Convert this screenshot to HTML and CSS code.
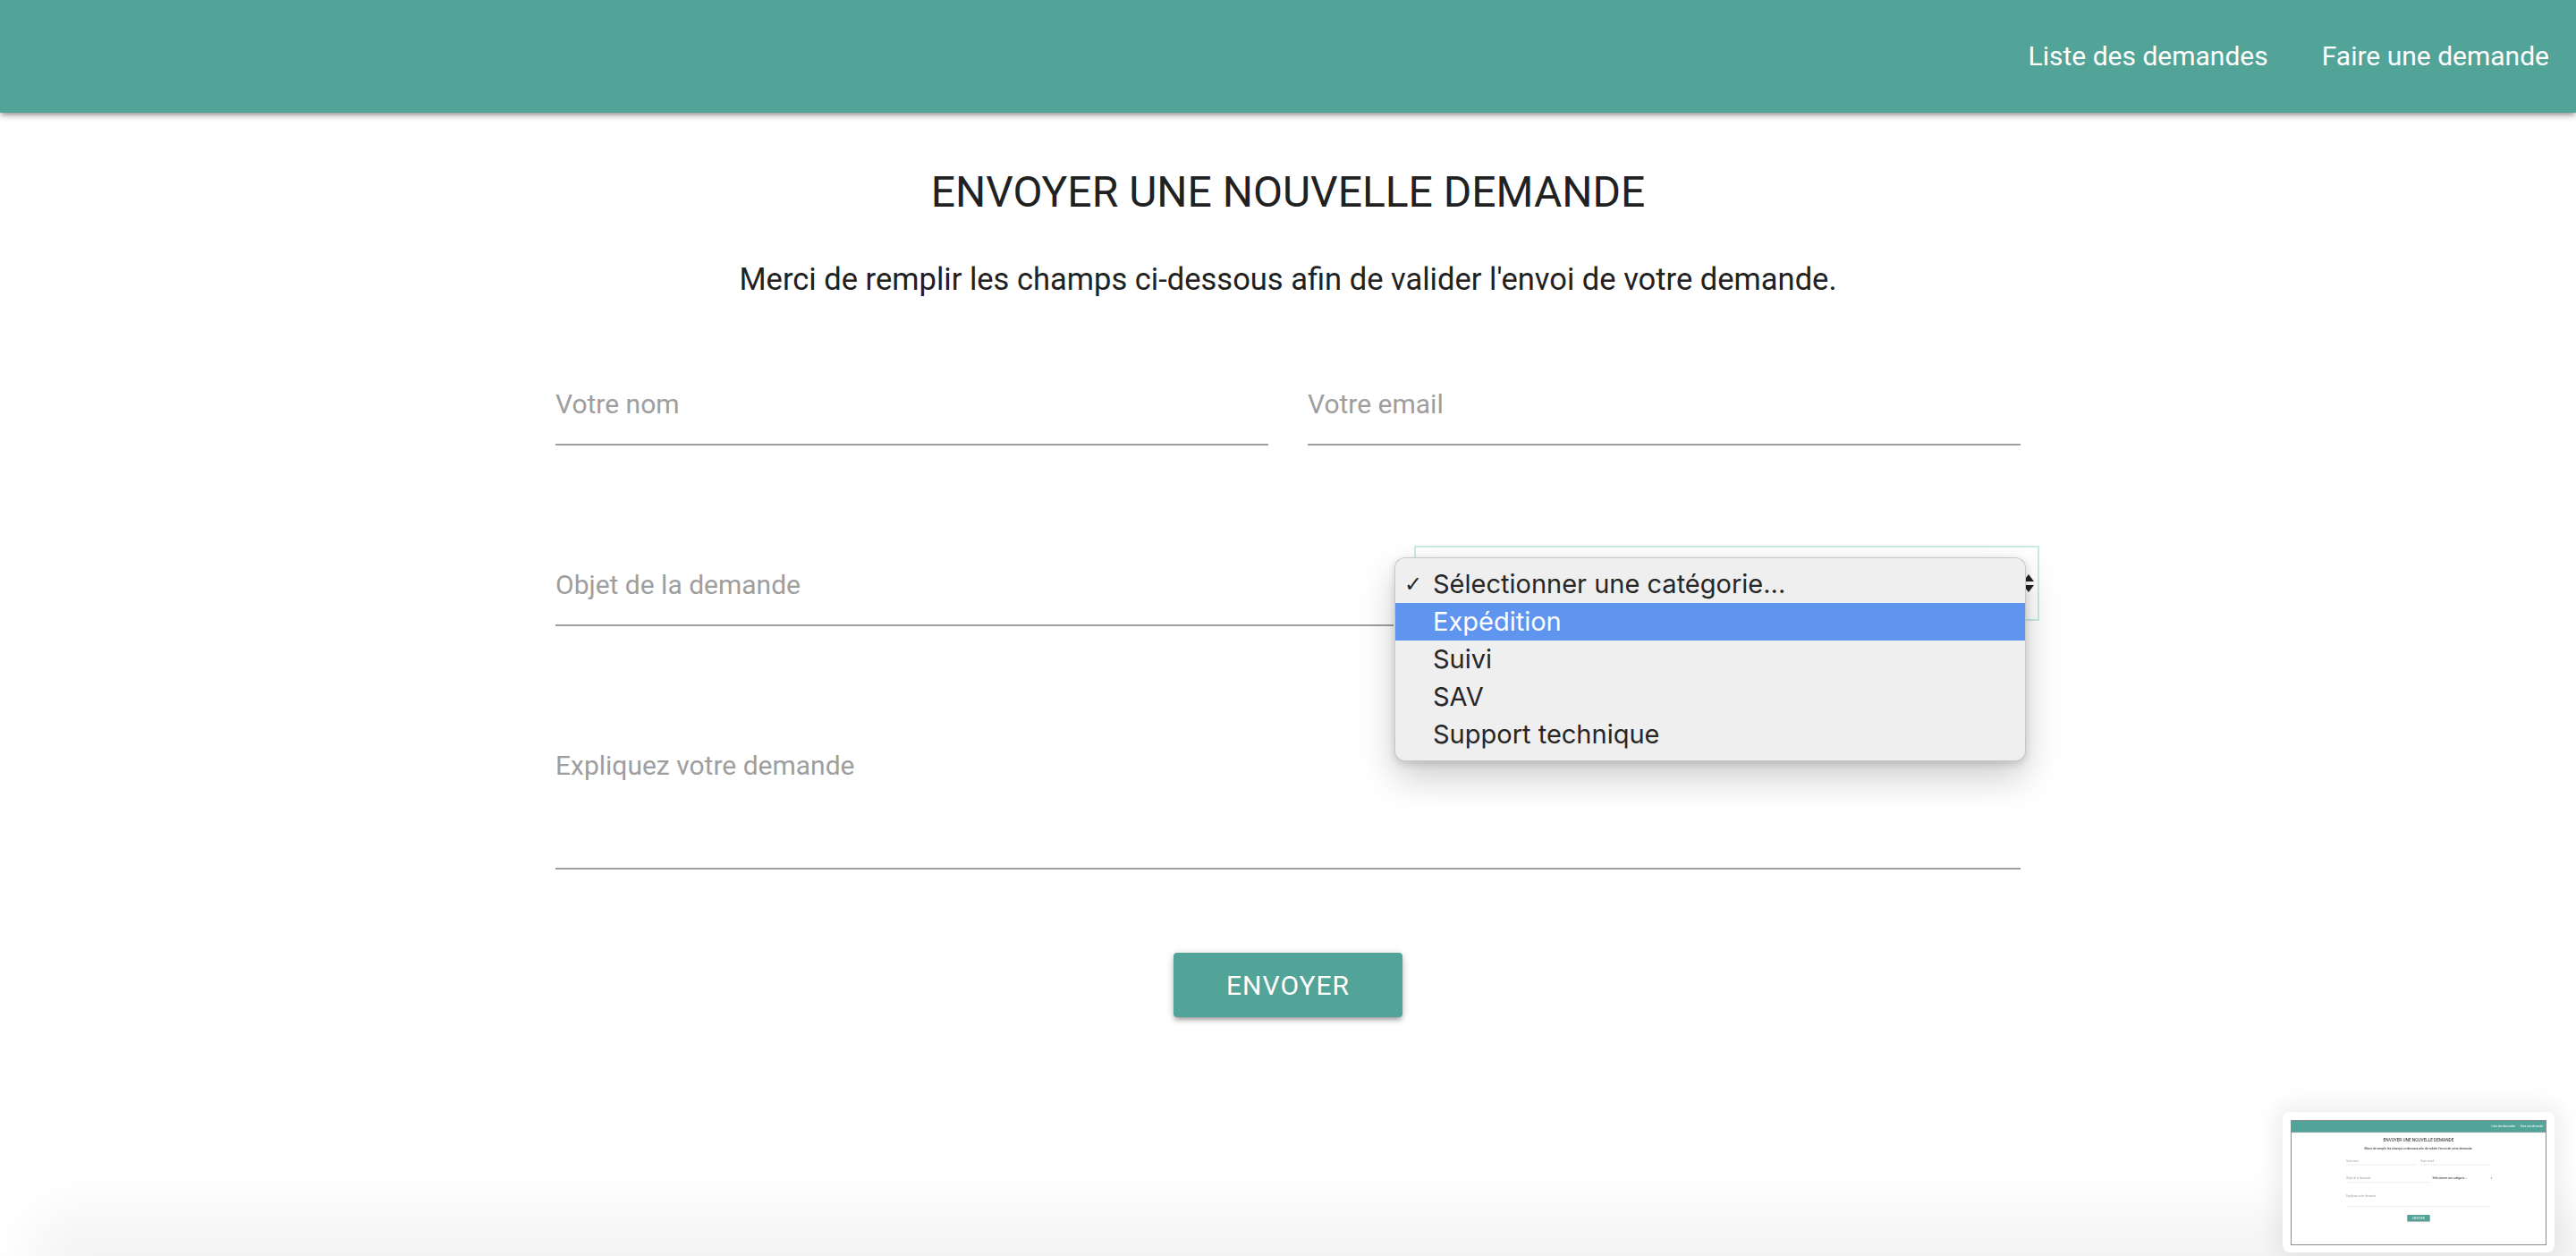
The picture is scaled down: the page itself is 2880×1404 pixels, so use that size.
FILE: index.html
```html
<!DOCTYPE html>
<html lang="fr">
<head>
<meta charset="utf-8">
<title>Envoyer une nouvelle demande</title>
<link rel="stylesheet" href="styles.css">
</head>
<body>
<div class="page">
  <header class="nav">
    <a class="nav-link" href="#">Liste des demandes</a>
    <a class="nav-link" href="#">Faire une demande</a>
  </header>
  <main class="container">
    <h1 class="title">ENVOYER UNE NOUVELLE DEMANDE</h1>
    <p class="intro">Merci de remplir les champs ci-dessous afin de valider l'envoi de votre demande.</p>
    <form class="form">
      <div class="row row-1">
        <div class="field"><span class="label">Votre nom</span></div>
        <div class="field"><span class="label">Votre email</span></div>
      </div>
      <div class="row row-2">
        <div class="field field-subject"><span class="label">Objet de la demande</span></div>
        <div class="select focused">
          <span class="select-value">Sélectionner une catégorie...</span>
          <svg class="select-arrows" width="14" height="22" viewBox="0 0 14 22"><path d="M7 1 L13 9 L1 9 Z" fill="#222"/><path d="M1 13 L13 13 L7 21 Z" fill="#222"/></svg>
        </div>
        <ul class="menu">
          <li class="menu-item"><span class="check">✓</span>Sélectionner une catégorie...</li>
          <li class="menu-item active">Expédition</li>
          <li class="menu-item">Suivi</li>
          <li class="menu-item">SAV</li>
          <li class="menu-item">Support technique</li>
        </ul>
      </div>
      <div class="row row-3">
        <div class="field field-message"><span class="label">Expliquez votre demande</span></div>
      </div>
      <div class="actions"><button class="btn" type="button">ENVOYER</button></div>
    </form>
  </main>
  <div class="edge-shadow"></div>
</div>
<div class="thumb">
  <div class="thumb-frame">
    <div class="page mini">
      <header class="nav">
        <a class="nav-link" href="#">Liste des demandes</a>
        <a class="nav-link" href="#">Faire une demande</a>
      </header>
      <main class="container">
        <h1 class="title">ENVOYER UNE NOUVELLE DEMANDE</h1>
        <p class="intro">Merci de remplir les champs ci-dessous afin de valider l'envoi de votre demande.</p>
        <div class="form">
          <div class="row row-1">
            <div class="field"><span class="label">Votre nom</span></div>
            <div class="field"><span class="label">Votre email</span></div>
          </div>
          <div class="row row-2">
            <div class="field field-subject"><span class="label">Objet de la demande</span></div>
            <div class="select">
              <span class="select-value">Sélectionner une catégorie...</span>
              <svg class="select-arrows" width="14" height="22" viewBox="0 0 14 22"><path d="M7 1 L13 9 L1 9 Z" fill="#222"/><path d="M1 13 L13 13 L7 21 Z" fill="#222"/></svg>
            </div>
          </div>
          <div class="row row-3">
            <div class="field field-message"><span class="label">Expliquez votre demande</span></div>
          </div>
          <div class="actions"><span class="btn">ENVOYER</span></div>
        </div>
      </main>
    </div>
  </div>
</div>
</body>
</html>
```
FILE: styles.css
```css
* { box-sizing: border-box; }
html, body { margin: 0; padding: 0; }
body {
  width: 2880px;
  height: 1404px;
  overflow: hidden;
  position: relative;
  background: #fff;
  font-family: Roboto, "Liberation Sans", sans-serif;
}
.page {
  width: 2880px;
  height: 1404px;
  background: #fff;
  position: relative;
  overflow: hidden;
}
.nav {
  height: 126px;
  background: #52a398;
  display: flex;
  justify-content: flex-end;
  position: relative;
  z-index: 2;
  box-shadow: 0 4px 4px rgba(0,0,0,.14), 0 6px 2px -4px rgba(0,0,0,.12), 0 2px 10px rgba(0,0,0,.2);
}
.nav-link {
  color: #fff;
  font-size: 30px;
  line-height: 126px;
  padding: 0 30px;
  text-decoration: none;
}
.container {
  width: 1638px;
  margin: 0 auto;
}
.title {
  margin: 60px 0 0;
  font-size: 48px;
  line-height: 58px;
  font-weight: 400;
  text-align: center;
  color: #212121;
}
.intro {
  margin: 48px 0 0;
  font-size: 34.5px;
  line-height: 40px;
  text-align: center;
  color: #212121;
}
.form { margin-top: 98px; }
.row {
  display: flex;
  gap: 44px;
}
.field {
  flex: 1;
  border-bottom: 2px solid #9e9e9e;
  padding-bottom: 22px;
}
.label {
  display: block;
  font-size: 30px;
  line-height: 44px;
  color: #9e9e9e;
}
.row-2 {
  margin-top: 112px;
  position: relative;
  gap: 23px;
  align-items: flex-start;
}
.field-subject {
  flex: 0 0 937px;
  margin-top: 22px;
}
.select {
  flex: 0 0 699px;
  height: 84px;
  position: relative;
  display: flex;
  align-items: center;
  padding-left: 14px;
  font-family: Inter, "Liberation Sans", sans-serif;
  font-size: 28px;
  font-weight: 500;
  color: #222;
  background: #fff;
  border: 2px solid #eeeeee;
}
.select.focused {
  border-color: #c9ebe6;
}
.select.focused .select-value {
  visibility: hidden;
}
.select-arrows {
  position: absolute;
  right: 3px;
  top: 29px;
}
.menu {
  position: absolute;
  left: 938px;
  top: 13px;
  width: 706px;
  margin: 0;
  padding: 8px 0;
  list-style: none;
  background: #efefef;
  border: 1px solid rgba(0,0,0,.16);
  border-radius: 12px;
  box-shadow: 0 18px 40px rgba(0,0,0,.2), 0 3px 8px rgba(0,0,0,.14);
  font-family: Inter, "Liberation Sans", sans-serif;
  font-size: 29px;
  color: #262626;
  z-index: 5;
}
.menu-item {
  position: relative;
  height: 42px;
  line-height: 42px;
  padding-left: 42px;
}
.menu-item.active {
  background: #5f94ef;
  color: #fff;
}
.check {
  position: absolute;
  left: 10px;
  font-family: "DejaVu Sans", sans-serif;
  font-size: 24px;
}
.row-3 { margin-top: 134px; }
.field-message { padding-bottom: 92px; }
.actions {
  margin-top: 93px;
  display: flex;
  justify-content: center;
}
.btn {
  width: 256px;
  height: 72px;
  border: none;
  border-radius: 4px;
  background: #52a398;
  color: #fff;
  font-family: Roboto, "Liberation Sans", sans-serif;
  font-size: 30px;
  letter-spacing: 1px;
  display: flex;
  align-items: center;
  justify-content: center;
  box-shadow: 0 4px 4px rgba(0,0,0,.14), 0 6px 2px -4px rgba(0,0,0,.12), 0 2px 10px rgba(0,0,0,.2);
}
.edge-shadow {
  position: absolute;
  left: 30px;
  right: -60px;
  bottom: -60px;
  height: 110px;
  border-radius: 60px;
  background: rgba(0,0,0,.045);
  filter: blur(28px);
}
.mini .edge-shadow { display: none; }
.thumb {
  position: absolute;
  left: 2552px;
  top: 1243px;
  width: 304px;
  height: 157px;
  padding: 9px 9px 8px;
  background: #fff;
  border-radius: 8px;
  box-shadow: 0 0 24px 8px rgba(0,0,0,.07);
  z-index: 10;
}
.thumb-frame {
  width: 286px;
  height: 140px;
  border: 1px solid #8e8e8e;
  overflow: hidden;
}
.page.mini {
  transform: scale(0.0986);
  transform-origin: 0 0;
}
```
